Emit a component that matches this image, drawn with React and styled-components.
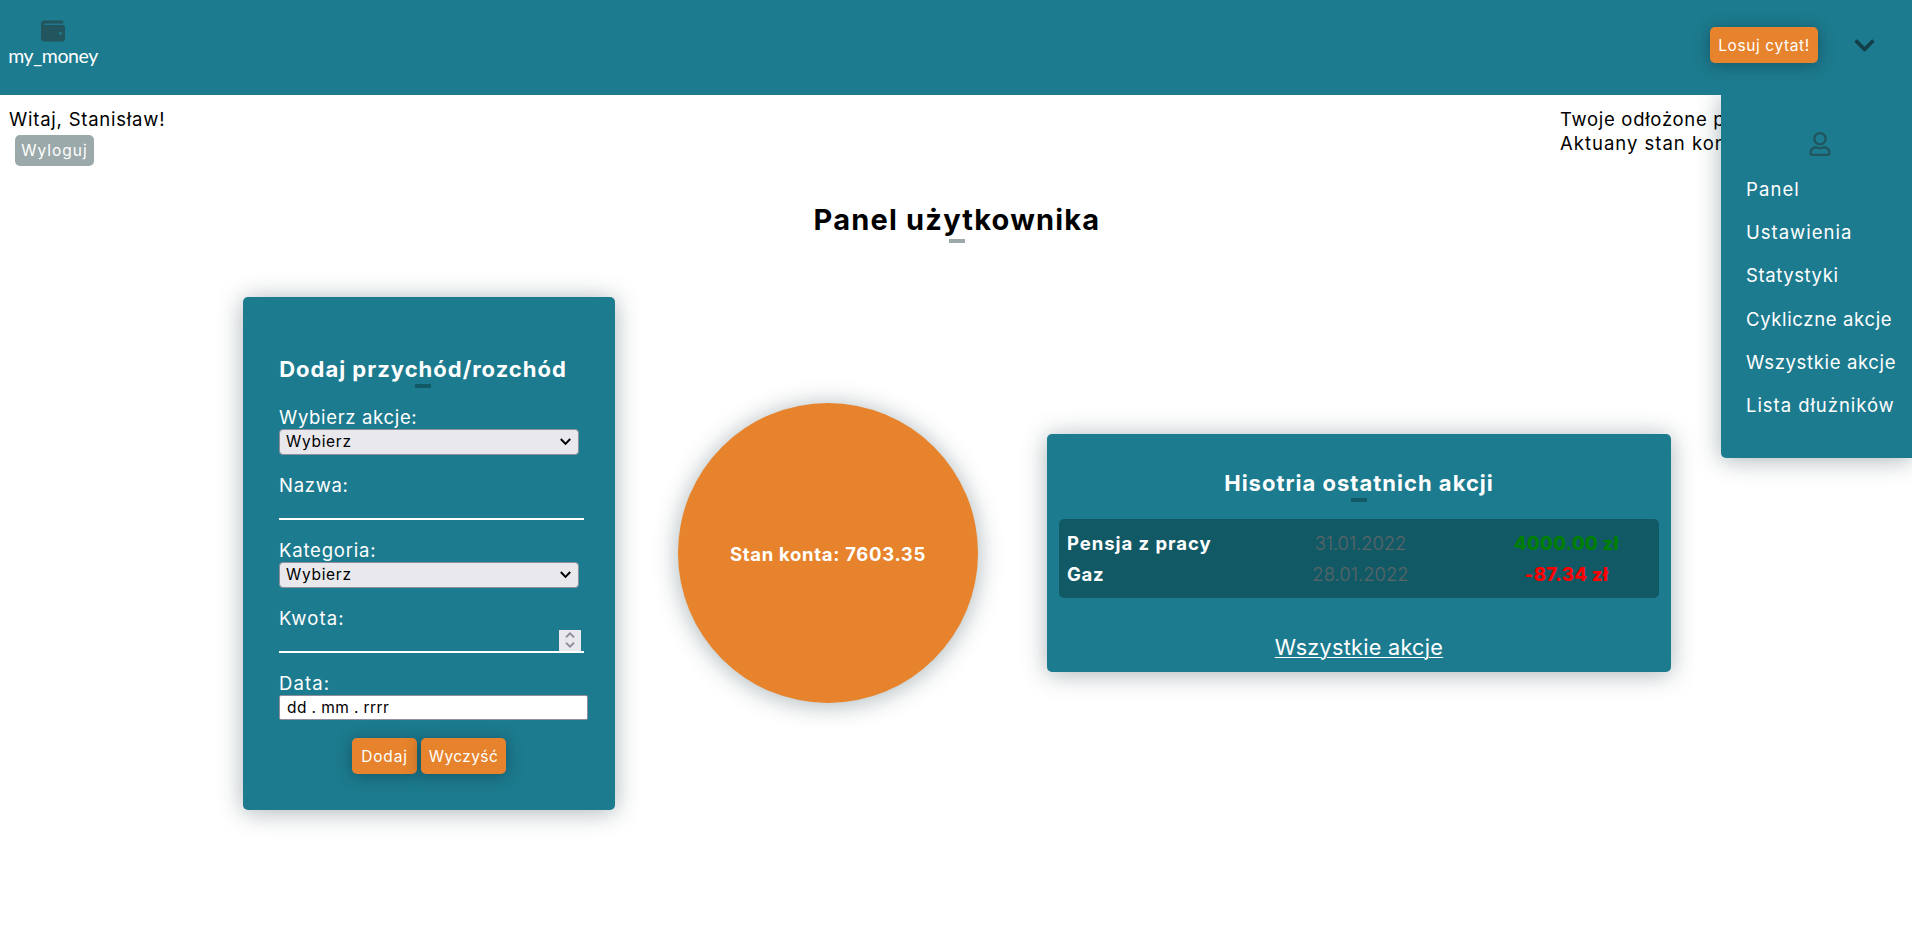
import React from "react";
import styled, { createGlobalStyle, css } from "styled-components";
import { FaWallet, FaChevronDown, FaRegUser } from "react-icons/fa";

const teal = "#1d7b8f";
const darkTeal = "#125966";
const orange = "#e6832c";
const grey = "#9ba9aa";
const shadow = "0 2px 24px rgba(10, 40, 50, 0.35)";

const GlobalStyle = createGlobalStyle`
  *, *::before, *::after { box-sizing: border-box; }
  body {
    margin: 0;
    background: #fff;
    color: #000;
    font-family: Inter, "Open Sans", sans-serif;
    font-size: 18.5px;
    line-height: 24px;
    overflow: hidden;
  }
  h1, h2, p, ul { margin: 0; padding: 0; }
  button { font-family: inherit; border: 0; }
`;

const Page = styled.div`
  position: relative;
  min-height: 943px;
  overflow: hidden;
`;

const Fit = styled.span`
  letter-spacing: ${(p) => p.$ls || 0}px;
  white-space: nowrap;
`;

const Header = styled.header`
  position: relative;
  z-index: 2;
  height: 95px;
  display: flex;
  justify-content: space-between;
  align-items: flex-start;
  background: ${teal};
`;

const Logo = styled.div`
  width: 106px;
  padding-top: 19px;
  display: flex;
  flex-direction: column;
  align-items: center;
  color: #fff;
  svg { color: #22555d; }
`;

const LogoName = styled.span`
  margin-top: 1px;
  font-family: Lato, sans-serif;
  font-weight: 400;
  font-size: 19.5px;
  line-height: 24px;
  letter-spacing: -0.4px;
`;

const HeaderActions = styled.div`
  display: flex;
  align-items: center;
  padding: 27px 36px 0 0;
  gap: 35px;
  color: #123f49;
`;

const Button = styled.button`
  width: ${(p) => p.$w}px;
  height: 36px;
  padding: 0;
  border-radius: 5px;
  background: ${orange};
  color: #fff;
  font-size: 15.5px;
  white-space: nowrap;
  box-shadow: 0 2px 16px rgba(10, 40, 50, 0.45);
  ${(p) =>
    p.$muted &&
    css`
      height: 31px;
      background: ${grey};
      box-shadow: none;
    `}
`;

const Menu = styled.nav`
  position: absolute;
  z-index: 1;
  top: 95px;
  right: 0;
  width: 191px;
  height: 363px;
  padding: 37px 0 0 25px;
  border-radius: 0 0 0 5px;
  background: ${teal};
  color: #fff;
  box-shadow: ${shadow};
`;

const MenuIcon = styled.div`
  display: flex;
  justify-content: center;
  height: 36px;
  padding-right: 18px;
  color: #22555d;
`;

const MenuList = styled.ul`
  list-style: none;
`;

const MenuItem = styled.li`
  line-height: 43.2px;
`;

const InfoBar = styled.section`
  height: 108px;
  padding: 12px 9px 0;
  display: flex;
  justify-content: space-between;
`;

const Greeting = styled.div`
  display: flex;
  flex-direction: column;
  gap: 4px;
  ${Button} { margin-left: 6px; }
`;

const Balances = styled.div`
  width: 343px;
`;

const Heading = styled.h1`
  display: flex;
  flex-direction: column;
  align-items: center;
  margin-bottom: 54px;
  padding-left: 2px;
  font-size: 29px;
  line-height: 34px;
  font-weight: 700;
  &::after {
    content: "";
    width: 16px;
    height: 4px;
    margin-top: 2px;
    background: ${grey};
  }
`;

const CardTitle = styled.h2`
  display: flex;
  flex-direction: column;
  align-items: center;
  width: ${(p) => p.$w || "100%"};
  margin-bottom: 17px;
  font-size: 22px;
  line-height: 26px;
  font-weight: 700;
  &::after {
    content: "";
    width: 16px;
    height: 4px;
    margin-top: 2px;
    background: ${darkTeal};
  }
`;

const Main = styled.main`
  display: flex;
  align-items: center;
  padding-left: 243px;
`;

const Card = styled.section`
  border-radius: 5px;
  background: ${teal};
  color: #fff;
  box-shadow: ${shadow};
`;

const FormCard = styled(Card)`
  width: 372px;
  height: 513px;
  padding: 59px 36px 36px;
`;

const Field = styled.div`
  display: flex;
  flex-direction: column;
  margin-bottom: 18px;
`;

const Select = styled.div`
  width: 300px;
  height: 26px;
  padding: 0 7px 0 6px;
  display: flex;
  justify-content: space-between;
  align-items: center;
  border: 1px solid #8f8f9d;
  border-radius: 4px;
  background: #e9e9ed;
  color: #000;
  font-size: 15.5px;
`;

const LineInput = styled.div`
  width: 305px;
  height: 23px;
  padding-right: 3px;
  display: flex;
  justify-content: flex-end;
  border-bottom: 2px solid #fff;
`;

const Spinner = styled.div`
  width: 22px;
  height: 21px;
  display: flex;
  justify-content: center;
  background: #e9e9ed;
`;

const DateInput = styled.div`
  width: 309px;
  height: 25px;
  padding-left: 7px;
  border: 1px solid #8f8f9d;
  border-radius: 2px;
  background: #fff;
  color: #000;
  font-size: 15.5px;
  line-height: 23px;
`;

const Buttons = styled.div`
  display: flex;
  justify-content: center;
  gap: 4px;
`;

const Circle = styled.div`
  width: 300px;
  height: 300px;
  margin: 0 69px 1px 63px;
  display: flex;
  justify-content: center;
  align-items: center;
  border-radius: 50%;
  background: ${orange};
  color: #fff;
  font-weight: 700;
  box-shadow: ${shadow};
  padding-top: 1px;
`;

const HistoryCard = styled(Card)`
  width: 624px;
  height: 238px;
  margin-bottom: 1px;
  padding: 36px 12px 12px;
`;

const History = styled.div`
  height: 79px;
  padding: 9px 0 0 8px;
  border-radius: 5px;
  background: ${darkTeal};
`;

const Row = styled.div`
  display: grid;
  grid-template-columns: 190px 206px 206px;
  line-height: 31px;
  text-align: center;
`;

const Name = styled.span`
  font-weight: 700;
  text-align: left;
`;

const DateCell = styled.span`
  padding-left: 1px;
  color: #5c6466;
  font-weight: 300;
`;

const Amount = styled.span`
  padding-left: 1px;
  font-weight: 800;
  color: ${(p) => (p.$negative ? "#f00" : "#008000")};
`;

const AllLink = styled.p`
  margin-top: 36px;
  text-align: center;
  font-size: 21.6px;
  line-height: 26px;
  text-decoration: underline;
  text-decoration-thickness: 1px;
  text-underline-offset: 2px;
`;

const menu = [
  ["Panel", 1.1],
  ["Ustawienia", 1],
  ["Statystyki", 0.6],
  ["Cykliczne akcje", 0.65],
  ["Wszystkie akcje", 0.65],
  ["Lista dłużników", 0.95],
];

const SelectBox = () => (
  <Select>
    <Fit $ls={0.7}>Wybierz</Fit>
    <svg width="11" height="8" viewBox="0 0 11 8" fill="none" stroke="#000" strokeWidth="2">
      <path d="M.8 1 5.5 5.9 10.2 1" />
    </svg>
  </Select>
);

export default function App() {
  return (
    <Page>
      <GlobalStyle />
      <Header>
        <Logo>
          <FaWallet size={24} />
          <LogoName>my_money</LogoName>
        </Logo>
        <HeaderActions>
          <Button $w={108}><Fit $ls={0.6}>Losuj cytat!</Fit></Button>
          <FaChevronDown size={23} />
        </HeaderActions>
      </Header>
      <Menu>
        <MenuIcon><FaRegUser size={24} /></MenuIcon>
        <MenuList>
          {menu.map(([label, ls]) => (
            <MenuItem key={label}><Fit $ls={ls}>{label}</Fit></MenuItem>
          ))}
        </MenuList>
      </Menu>
      <InfoBar>
        <Greeting>
          <Fit $ls={0.77}>Witaj, Stanisław!</Fit>
          <Button $muted $w={79}><Fit $ls={1}>Wyloguj</Fit></Button>
        </Greeting>
        <Balances>
          <p><Fit $ls={0.7}>Twoje odłożone pieniądze</Fit></p>
          <p><Fit $ls={1}>Aktuany stan konta</Fit></p>
        </Balances>
      </InfoBar>
      <Heading><Fit $ls={1.2}>Panel użytkownika</Fit></Heading>
      <Main>
        <FormCard>
          <CardTitle $w="288px"><Fit $ls={1}>Dodaj przychód/rozchód</Fit></CardTitle>
          <Field><Fit $ls={0.67}>Wybierz akcje:</Fit><SelectBox /></Field>
          <Field><Fit $ls={0.7}>Nazwa:</Fit><LineInput /></Field>
          <Field><Fit $ls={0.8}>Kategoria:</Fit><SelectBox /></Field>
          <Field>
            <Fit $ls={1.1}>Kwota:</Fit>
            <LineInput>
              <Spinner>
                <svg width="10" height="21" viewBox="0 0 10 21" fill="none" stroke="#8f8f9d" strokeWidth="1.9">
                  <path d="M1 7.2 5 3.4l4 3.8M1 12.8l4 3.8 4-3.8" />
                </svg>
              </Spinner>
            </LineInput>
          </Field>
          <Field>
            <Fit $ls={1.1}>Data:</Fit>
            <DateInput><Fit $ls={0.4}>dd . mm . rrrr</Fit></DateInput>
          </Field>
          <Buttons>
            <Button $w={65}><Fit $ls={0.8}>Dodaj</Fit></Button>
            <Button $w={85}><Fit $ls={0.4}>Wyczyść</Fit></Button>
          </Buttons>
        </FormCard>
        <Circle><Fit $ls={0.68}>Stan konta: 7603.35</Fit></Circle>
        <HistoryCard>
          <CardTitle><Fit $ls={1}>Hisotria ostatnich akcji</Fit></CardTitle>
          <History>
            <Row>
              <Name><Fit $ls={0.95}>Pensja z pracy</Fit></Name>
              <DateCell><Fit $ls={-0.1}>31.01.2022</Fit></DateCell>
              <Amount><Fit $ls={0.3}>4000.00 zł</Fit></Amount>
            </Row>
            <Row>
              <Name><Fit $ls={0.7}>Gaz</Fit></Name>
              <DateCell><Fit>28.01.2022</Fit></DateCell>
              <Amount $negative><Fit $ls={0.35}>-87.34 zł</Fit></Amount>
            </Row>
          </History>
          <AllLink><Fit $ls={0.3}>Wszystkie akcje</Fit></AllLink>
        </HistoryCard>
      </Main>
    </Page>
  );
}
